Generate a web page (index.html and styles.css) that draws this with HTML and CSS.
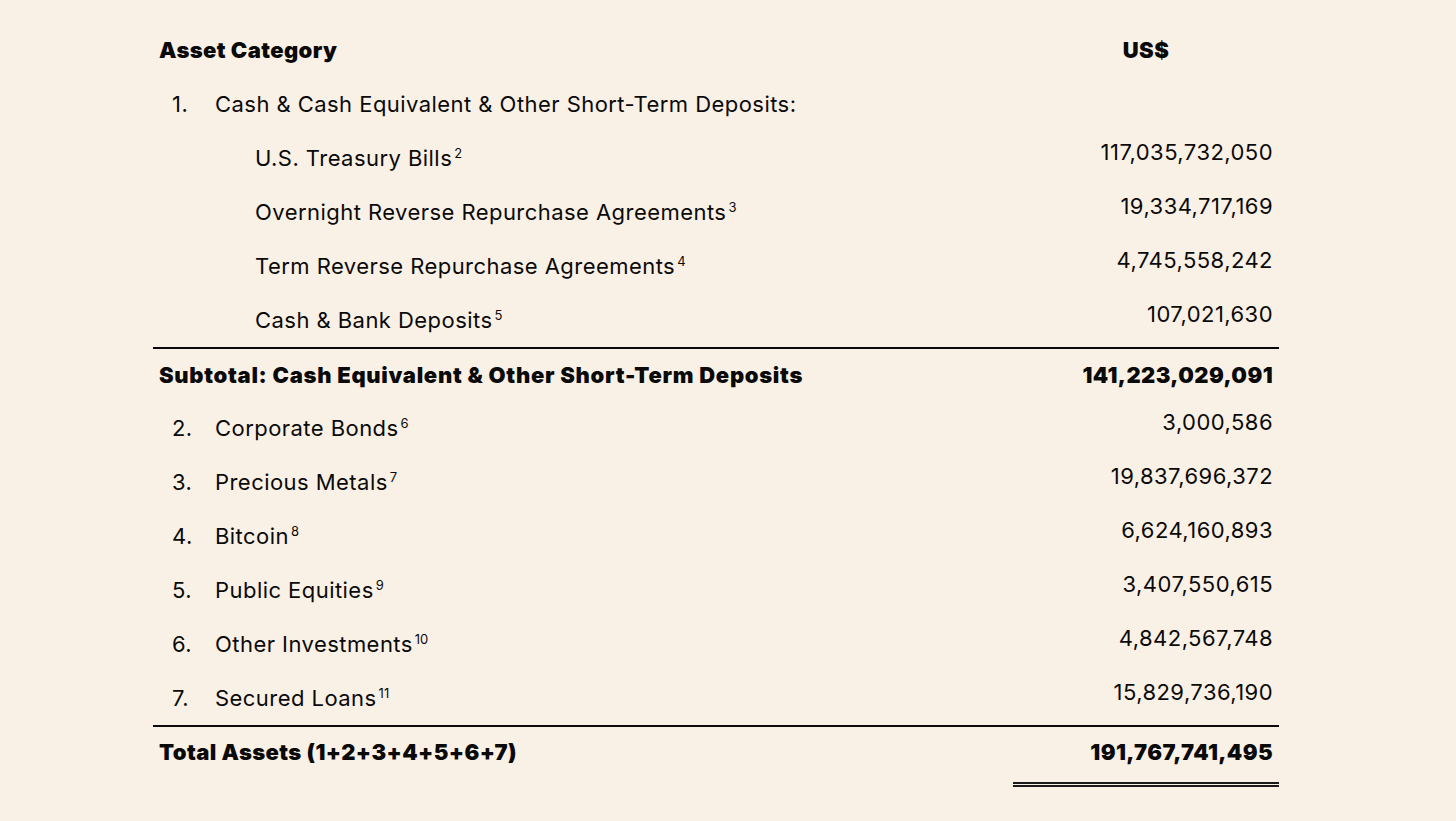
FILE: index.html
```html
<!DOCTYPE html>
<html>
<head>
<meta charset="utf-8">
<link rel="stylesheet" href="styles.css">
</head>
<body>
<div class="sheet">
  <div class="row head">
    <div class="label bold">Asset Category</div>
    <div class="value center bold">US$</div>
  </div>
  <div class="row">
    <div class="label"><span class="num">1.</span>Cash &amp; Cash Equivalent &amp; Other Short-Term Deposits:</div>
    <div class="value"></div>
  </div>
  <div class="row">
    <div class="label sub">U.S. Treasury Bills<sup>2</sup></div>
    <div class="value up">117,035,732,050</div>
  </div>
  <div class="row">
    <div class="label sub">Overnight Reverse Repurchase Agreements<sup>3</sup></div>
    <div class="value up">19,334,717,169</div>
  </div>
  <div class="row">
    <div class="label sub">Term Reverse Repurchase Agreements<sup>4</sup></div>
    <div class="value up">4,745,558,242</div>
  </div>
  <div class="row">
    <div class="label sub">Cash &amp; Bank Deposits<sup>5</sup></div>
    <div class="value up">107,021,630</div>
  </div>
  <div class="row subtotal">
    <div class="label bold wide">Subtotal: Cash Equivalent &amp; Other Short-Term Deposits</div>
    <div class="value bold">141,223,029,091</div>
  </div>
  <div class="row">
    <div class="label"><span class="num">2.</span>Corporate Bonds<sup>6</sup></div>
    <div class="value up">3,000,586</div>
  </div>
  <div class="row">
    <div class="label"><span class="num">3.</span>Precious Metals<sup>7</sup></div>
    <div class="value up">19,837,696,372</div>
  </div>
  <div class="row">
    <div class="label"><span class="num">4.</span>Bitcoin<sup>8</sup></div>
    <div class="value up">6,624,160,893</div>
  </div>
  <div class="row">
    <div class="label"><span class="num">5.</span>Public Equities<sup>9</sup></div>
    <div class="value up">3,407,550,615</div>
  </div>
  <div class="row">
    <div class="label"><span class="num">6.</span>Other Investments<sup>10</sup></div>
    <div class="value up">4,842,567,748</div>
  </div>
  <div class="row">
    <div class="label"><span class="num">7.</span>Secured Loans<sup>11</sup></div>
    <div class="value up">15,829,736,190</div>
  </div>
  <div class="row total">
    <div class="label bold">Total Assets (1+2+3+4+5+6+7)</div>
    <div class="value bold dbl">191,767,741,495</div>
  </div>
</div>
</body>
</html>
```

FILE: styles.css
```css
html, body {
  margin: 0;
  padding: 0;
  background: #faf1e6;
}
body {
  font-family: Inter, "Noto Sans", sans-serif;
  color: #0a0a0a;
  width: 1456px;
  height: 821px;
  overflow: hidden;
}
.sheet {
  margin: 23px 0 0 153px;
  width: 1126px;
  display: flex;
  flex-direction: column;
}
.row {
  display: flex;
  align-items: center;
  height: 54px;
  font-size: 22px;
  letter-spacing: 0.45px;
}
.label {
  flex: 1;
  padding-left: 19px;
  white-space: nowrap;
}
.label.bold {
  padding-left: 6px;
}
.label.sub {
  padding-left: 102px;
}
.num {
  display: inline-block;
  width: 43px;
}
.bold {
  font-weight: 900;
  letter-spacing: 0.4px;
}
.bold.wide {
  letter-spacing: 0.7px;
}
.value {
  width: 266px;
  flex: none;
  text-align: right;
  padding-right: 6px;
  box-sizing: border-box;
}
.value.center {
  text-align: center;
  padding-right: 0;
}
.value.up {
  margin-bottom: 13px;
}
sup {
  font-size: 13px;
  line-height: 0;
  vertical-align: 8px;
  margin-left: 2px;
  letter-spacing: 0;
}
.subtotal {
  border-top: 2px solid #0a0a0a;
  height: 52px;
}
.total {
  border-top: 2px solid #0a0a0a;
  height: 50px;
}
.dbl {
  position: relative;
}
.dbl::after {
  content: "";
  position: absolute;
  left: 0;
  right: 0;
  top: 43px;
  height: 1px;
  border-top: 2px solid #1a1a1a;
  border-bottom: 2px solid #1a1a1a;
}
```
